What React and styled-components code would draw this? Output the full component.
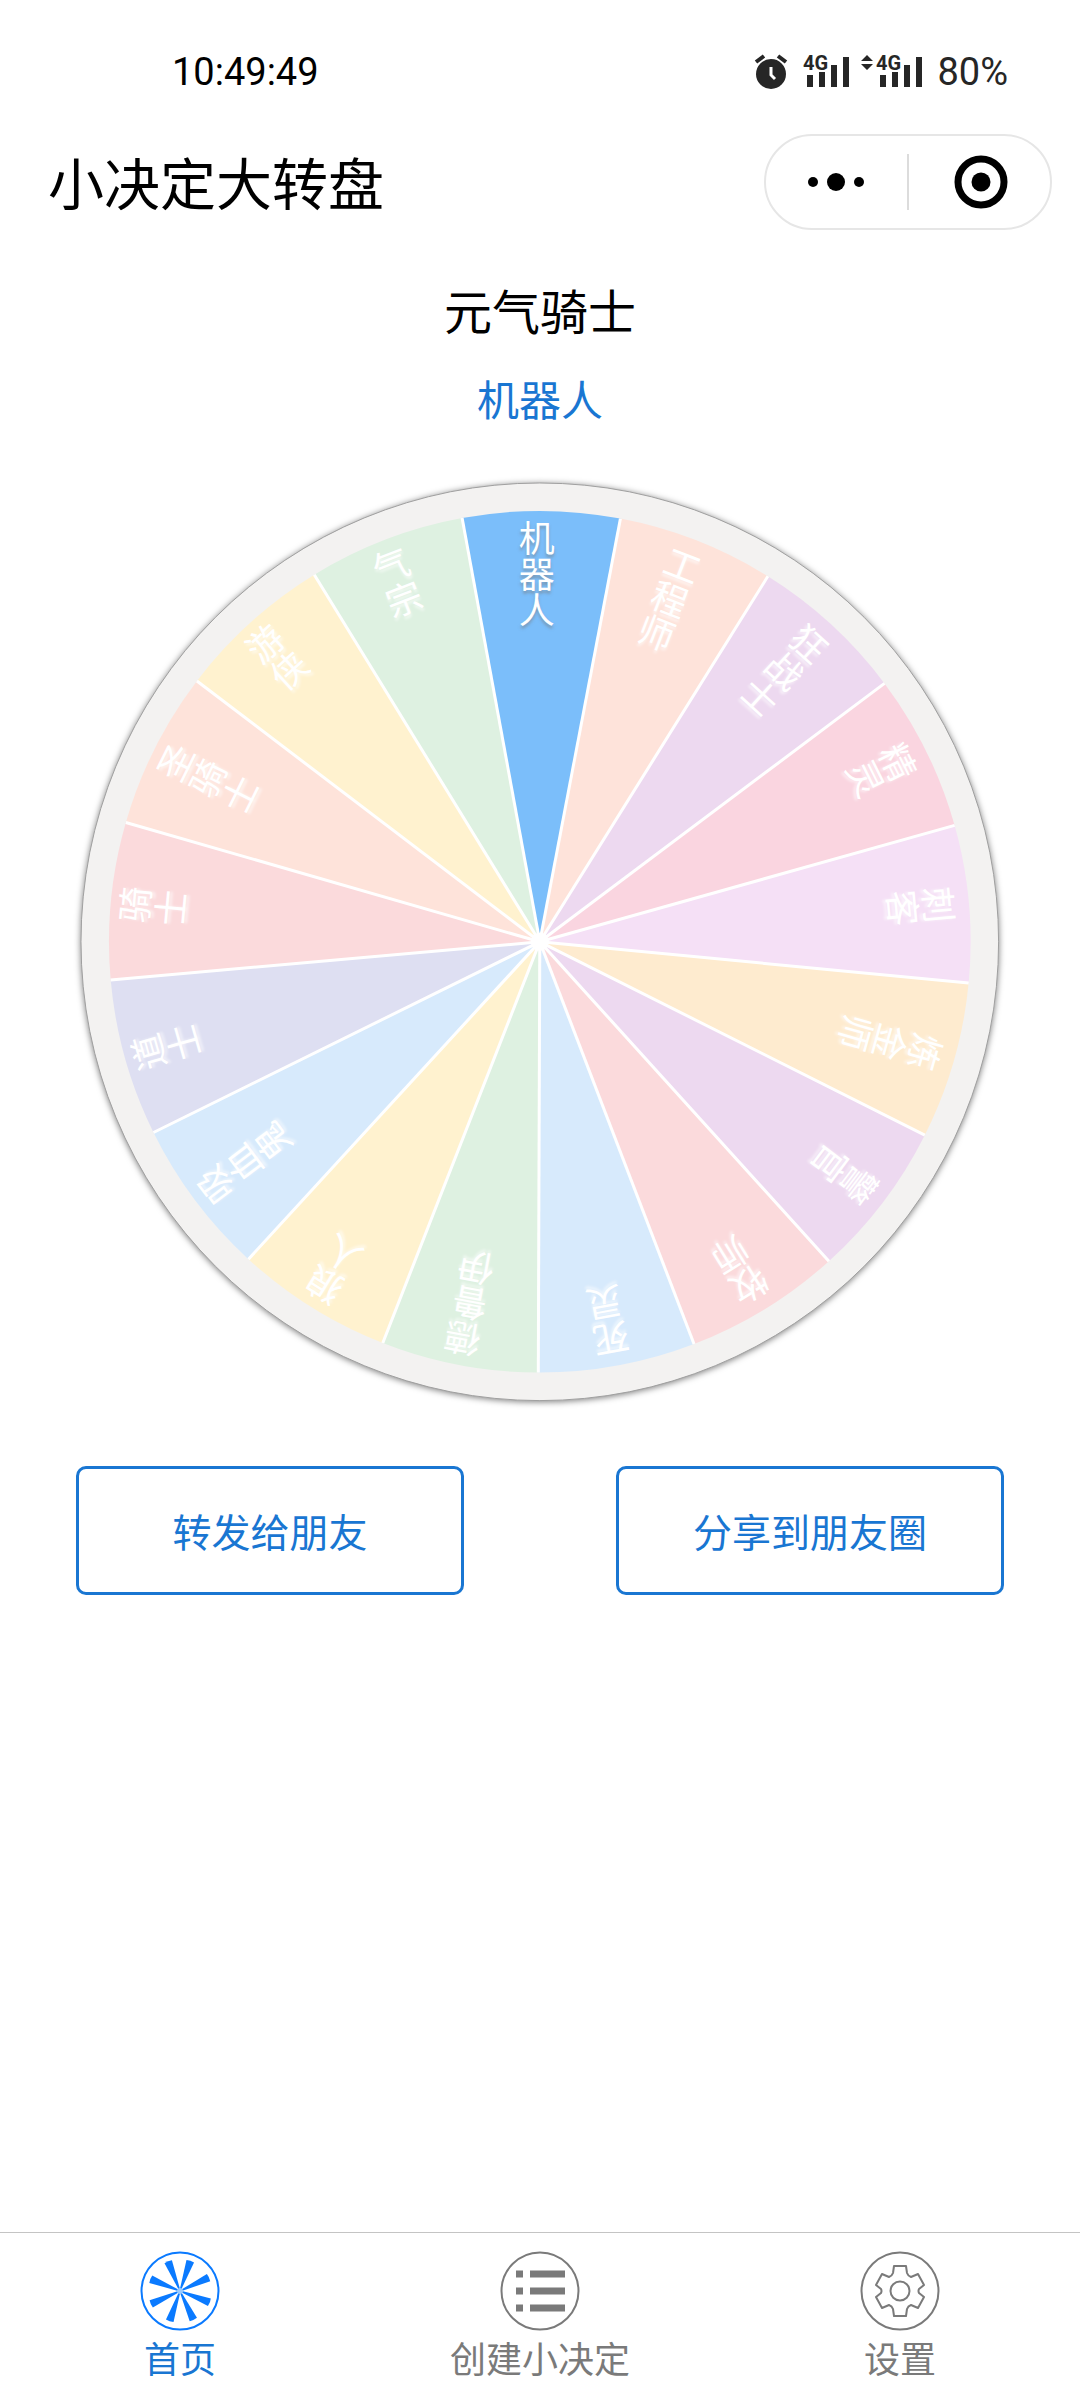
import React from 'react';
import styled, { createGlobalStyle } from 'styled-components';

const GlobalStyle = createGlobalStyle`
  *, *::before, *::after { box-sizing: border-box; }
  body {
    margin: 0;
    background: #fff;
    font-family: Roboto, "Noto Sans CJK SC", sans-serif;
  }
`;

const BLUE = '#1976d2';

const Page = styled.div`
  display: flex;
  flex-direction: column;
  min-height: 100vh;
`;

const StatusBar = styled.div`
  display: flex;
  justify-content: space-between;
  align-items: center;
  height: 112px;
  padding: 32px 72px 0 172px;
  font-size: 38px;
  line-height: 48px;
`;

const StatusIcons = styled.div`
  display: flex;
  align-items: center;
  gap: 12px;
  color: #262626;

  svg { overflow: visible; }
`;

const NavBar = styled.header`
  display: flex;
  justify-content: space-between;
  align-items: center;
  height: 140px;
  padding: 0 28px 0 48px;
`;

const AppName = styled.h1`
  margin: 0;
  padding-top: 8px;
  font-size: 56px;
  line-height: 80px;
  font-weight: 400;
`;

const Capsule = styled.div`
  display: flex;
  align-items: center;
  width: 288px;
  height: 96px;
  border: 2px solid #e6e6e6;
  border-radius: 48px;
`;

const CapsuleButton = styled.button`
  display: flex;
  flex: 1;
  justify-content: center;
  align-items: center;
  height: 56px;
  padding: 0;
  border: 0;
  background: none;
  color: #000;

  & + & { border-left: 2px solid #dcdcdc; }
`;

const Main = styled.main`
  display: flex;
  flex: 1;
  flex-direction: column;
  align-items: center;
  padding-top: 26px;
`;

const WheelTitle = styled.h2`
  margin: 0;
  font-size: 48px;
  line-height: 72px;
  font-weight: 400;
`;

const Result = styled.p`
  margin: 16px 0 0;
  font-size: 42px;
  line-height: 72px;
  color: ${BLUE};
`;

const WheelBox = styled.svg`
  display: block;
  width: 87%;
  margin-top: 34px;
`;

const Rim = styled.circle`
  fill: #f3f2f1;
  stroke: #a0a0a0;
  stroke-width: 1px;
  filter: drop-shadow(0 1px 3px rgba(0, 0, 0, 0.5));
`;

const Label = styled.text`
  fill: #fff;
  font-size: 36px;
  text-anchor: middle;
  text-shadow: 0 3px 3px ${(p) => (p.$active ? 'rgba(120, 120, 120, 0.5)' : 'rgba(255, 255, 255, 0.6)')};
`;

const Actions = styled.div`
  display: flex;
  justify-content: space-around;
  width: 100%;
  margin-top: 54px;
`;

const ActionButton = styled.button`
  width: 36%;
  height: 129px;
  padding: 0;
  border: 3px solid ${BLUE};
  border-radius: 10px;
  background: #fff;
  color: ${BLUE};
  font-family: inherit;
  font-size: 39px;
`;

const TabBar = styled.nav`
  display: flex;
  height: 168px;
  border-top: 1px solid #c4c4c4;
`;

const Tab = styled.a`
  display: flex;
  flex: 1;
  flex-direction: column;
  align-items: center;
  gap: 6px;
  padding-top: 18px;
  font-size: 36px;
  line-height: 48px;
  text-decoration: none;
  color: ${(p) => (p.$active ? BLUE : '#7a7a7a')};

  svg { color: ${(p) => (p.$active ? '#0a7aff' : '#7a7a7a')}; }
`;

const SLICES = [
  ['机器人', '#7bbefa'],
  ['工程师', '#fee3da'],
  ['狂战士', '#edd9f0'],
  ['精灵', '#fad5e0'],
  ['刺客', '#f5e0f6'],
  ['炼金师', '#feebcf'],
  ['警官', '#edd9f0'],
  ['牧师', '#fbdadc'],
  ['死灵', '#d7eafc'],
  ['德鲁伊', '#def1e1'],
  ['狼人', '#fff2cf'],
  ['吸血鬼', '#d7eafc'],
  ['道士', '#dedff2'],
  ['骑士', '#fbdadc'],
  ['圣骑士', '#fee3da'],
  ['游侠', '#fff2cf'],
  ['气宗', '#def1e1'],
];

const STEP = 360 / SLICES.length;
const RADIUS = 431;

function point(deg, r) {
  const a = (deg * Math.PI) / 180;
  return [r * Math.sin(a), -r * Math.cos(a)];
}

function Wheel() {
  const edges = SLICES.map((_, i) => point((i + 0.5) * STEP, RADIUS));
  return (
    <WheelBox viewBox="-470 -470 940 940" role="img" aria-label="元气骑士">
      <Rim r="459" />
      <g transform="rotate(0.2)">
        {SLICES.map(([name, color], i) => {
          const [x2, y2] = edges[i];
          const [x1, y1] = edges[(i + SLICES.length - 1) % SLICES.length];
          return <path key={name} fill={color} d={`M0 0L${x1} ${y1}A${RADIUS} ${RADIUS} 0 0 1 ${x2} ${y2}Z`} />;
        })}
        {edges.map(([x, y], i) => (
          <line key={i} x2={x} y2={y} stroke="#fff" strokeWidth="3" />
        ))}
        <circle r="9" fill="#fff" />
      </g>
      <g transform="translate(-3 0)">
        {SLICES.map(([name], i) => (
          <Label key={name} $active={i === 0} transform={`rotate(${i * STEP})`}>
            {[...name].map((ch, n) => (
              <tspan key={n} x="0" y={-390 + n * 36}>{ch}</tspan>
            ))}
          </Label>
        ))}
      </g>
    </WheelBox>
  );
}

function AlarmIcon() {
  return (
    <svg width="36" height="36" viewBox="0 0 36 36" aria-hidden="true">
      <circle cx="16" cy="20" r="15" fill="currentColor" />
      <path d="M1 8L9 2M31 8L23 2" stroke="currentColor" strokeWidth="4" />
      <path d="M16 13v8l4 4" fill="none" stroke="#fff" strokeWidth="3" />
    </svg>
  );
}

const NetLabel = styled.text`
  font-family: Roboto, sans-serif;
  font-size: 20px;
  font-weight: 700;
  fill: currentColor;
`;

function Signal({ arrows }) {
  const pad = arrows ? 12 : 0;
  return (
    <svg width={49 + pad} height="44" viewBox={`${-pad} -4 ${49 + pad} 44`} aria-hidden="true">
      <NetLabel x="0" y="16">4G</NetLabel>
      <path d="M7 21v12M19 18v15M31 11v22M43 3v30" stroke="currentColor" strokeWidth="6" />
      {arrows && <path d="M-9 1l6 6h-12zM-9 16l6 -6h-12z" fill="currentColor" />}
    </svg>
  );
}

const Ring = () => <circle cx="40" cy="40" r="38.500" fill="none" stroke="currentColor" strokeWidth="2" />;

function HomeIcon() {
  return (
    <svg width="80" height="80" viewBox="0 0 80 80" aria-hidden="true">
      <Ring />
      {[19, 65, 111, 155, 199, 246, 292, 338].map((a) => (
        <path key={a} transform={`rotate(${a} 40 40)`} d="M39.500 40L36 8.500Q40 7.500 44 8.500L40.500 40Z" fill="currentColor" />
      ))}
      <circle cx="40" cy="40" r="3" fill="#9acbff" />
    </svg>
  );
}

function ListIcon() {
  return (
    <svg width="80" height="80" viewBox="0 0 80 80" aria-hidden="true">
      <Ring />
      <path d="M16 23h7M30 23h35M16 40h7M30 40h35M16 57h7M30 57h35" stroke="currentColor" strokeWidth="7" />
    </svg>
  );
}

function GearIcon() {
  return (
    <svg width="80" height="80" viewBox="0 0 80 80" aria-hidden="true">
      <Ring />
      <g fill="none" stroke="currentColor" strokeWidth="2" strokeLinejoin="round">
        <circle cx="40" cy="40" r="9.500" />
        <path d="M34 15h12l1 7q1 3 4 4l7-3l6 11l-5 4q-1 2 0 4l5 4l-6 11l-7-3q-3 1-4 4l-1 7h-12l-1-7q-1-3-4-4l-7 3l-6-11l5-4q1-2 0-4l-5-4l6-11l7 3q3-1 4-4z" />
      </g>
    </svg>
  );
}

export default function App() {
  return (
    <Page>
      <GlobalStyle />
      <StatusBar>
        <span>10:49:49</span>
        <StatusIcons>
          <AlarmIcon />
          <Signal />
          <Signal arrows />
          <span>80%</span>
        </StatusIcons>
      </StatusBar>
      <NavBar>
        <AppName>小决定大转盘</AppName>
        <Capsule>
          <CapsuleButton aria-label="更多">
            <svg width="60" height="20" viewBox="0 0 60 20" fill="currentColor">
              <circle cx="6" cy="10" r="5" />
              <circle cx="29" cy="10" r="9" />
              <circle cx="52" cy="10" r="5" />
            </svg>
          </CapsuleButton>
          <CapsuleButton aria-label="关闭">
            <svg width="56" height="54" viewBox="0 0 56 54">
              <circle cx="29" cy="27" r="23" fill="none" stroke="currentColor" strokeWidth="7" />
              <circle cx="29" cy="27" r="9.500" fill="currentColor" />
            </svg>
          </CapsuleButton>
        </Capsule>
      </NavBar>
      <Main>
        <WheelTitle>元气骑士</WheelTitle>
        <Result>机器人</Result>
        <Wheel />
        <Actions>
          <ActionButton>转发给朋友</ActionButton>
          <ActionButton>分享到朋友圈</ActionButton>
        </Actions>
      </Main>
      <TabBar>
        <Tab href="#home" $active><HomeIcon />首页</Tab>
        <Tab href="#create"><ListIcon />创建小决定</Tab>
        <Tab href="#settings"><GearIcon />设置</Tab>
      </TabBar>
    </Page>
  );
}
